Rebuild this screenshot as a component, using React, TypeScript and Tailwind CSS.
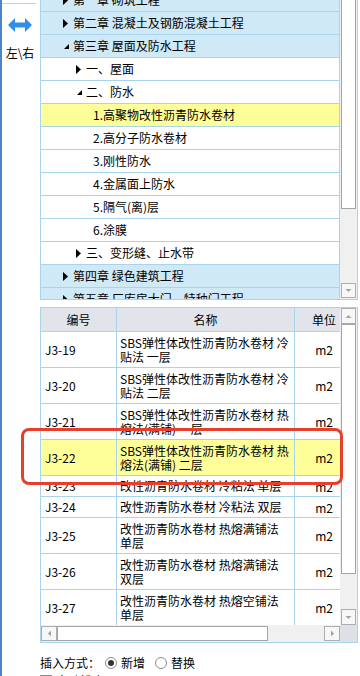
import React from "react";

const LINE = "border-[#a8d4ef]";

type TreeRow = {
  text: string;
  level: 0 | 1 | 2;
  kind: "closed" | "open" | "leaf";
  tone: "blue" | "white" | "yellow";
};

const TREE: TreeRow[] = [
  { text: "第一章 砌筑工程", level: 0, kind: "closed", tone: "blue" },
  { text: "第二章 混凝土及钢筋混凝土工程", level: 0, kind: "closed", tone: "blue" },
  { text: "第三章 屋面及防水工程", level: 0, kind: "open", tone: "blue" },
  { text: "一、屋面", level: 1, kind: "closed", tone: "white" },
  { text: "二、防水", level: 1, kind: "open", tone: "white" },
  { text: "1.高聚物改性沥青防水卷材", level: 2, kind: "leaf", tone: "yellow" },
  { text: "2.高分子防水卷材", level: 2, kind: "leaf", tone: "white" },
  { text: "3.刚性防水", level: 2, kind: "leaf", tone: "white" },
  { text: "4.金属面上防水", level: 2, kind: "leaf", tone: "white" },
  { text: "5.隔气(离)层", level: 2, kind: "leaf", tone: "white" },
  { text: "6.涂膜", level: 2, kind: "leaf", tone: "white" },
  { text: "三、变形缝、止水带", level: 1, kind: "closed", tone: "white" },
  { text: "第四章 绿色建筑工程", level: 0, kind: "closed", tone: "blue" },
  { text: "第五章 厂库房大门、特种门工程", level: 0, kind: "closed", tone: "blue" },
];

type Item = { code: string; name: string[]; unit: string; hl?: boolean };

const ITEMS: Item[] = [
  { code: "J3-19", name: ["SBS弹性体改性沥青防水卷材 冷", "贴法 一层"], unit: "m2" },
  { code: "J3-20", name: ["SBS弹性体改性沥青防水卷材 冷", "贴法 二层"], unit: "m2" },
  { code: "J3-21", name: ["SBS弹性体改性沥青防水卷材 热", "熔法(满铺) 一层"], unit: "m2" },
  { code: "J3-22", name: ["SBS弹性体改性沥青防水卷材 热", "熔法(满铺) 二层"], unit: "m2", hl: true },
  { code: "J3-23", name: ["改性沥青防水卷材 冷粘法 单层"], unit: "m2" },
  { code: "J3-24", name: ["改性沥青防水卷材 冷粘法 双层"], unit: "m2" },
  { code: "J3-25", name: ["改性沥青防水卷材 热熔满铺法", "单层"], unit: "m2" },
  { code: "J3-26", name: ["改性沥青防水卷材 热熔满铺法", "双层"], unit: "m2" },
  { code: "J3-27", name: ["改性沥青防水卷材 热熔空铺法", "单层"], unit: "m2" },
];

function Caret({ open }: { open: boolean }) {
  return (
    <svg width="10" height="9" viewBox="0 0 10 9" className="shrink-0">
      {open ? <polygon points="6,2 6,7 1,7" fill="#000" /> : <polygon points="0,0 5,4.5 0,9" fill="#000" />}
    </svg>
  );
}

// little grey arrow used on scrollbar buttons
function ScrollBtn({ dir, className }: { dir: "up" | "down" | "left" | "right"; className: string }) {
  const pts = {
    up: "1.5,5 7.5,5 4.5,2",
    down: "1.5,2 7.5,2 4.5,5",
    left: "5,1.5 5,7.5 2,4.5",
    right: "2,1.5 2,7.5 5,4.5",
  }[dir];
  const vert = dir === "up" || dir === "down";
  return (
    <div className={`flex shrink-0 items-center justify-center border border-[#adadad] bg-[#f7f7f7] ${className}`}>
      <svg width={vert ? 9 : 7} height={vert ? 7 : 9} viewBox={vert ? "0 0 9 7" : "0 0 7 9"}>
        <polygon points={pts} fill="#a3a3a3" />
      </svg>
    </div>
  );
}

function Tree() {
  return (
    <div className={`flex h-[300px] shrink-0 border-x border-b ${LINE}`}>
      <div className={`w-[299px] overflow-hidden border-r ${LINE}`}>
        <div className="-mt-[11px]">
          {TREE.map((r) => (
            <div
              key={r.text}
              className={`flex h-[23px] items-center border-b ${LINE} ${
                r.tone === "blue" ? "bg-[#cfe9f7]" : r.tone === "yellow" ? "bg-[#ffff99]" : "bg-white"
              } ${r.level === 0 ? "pl-[22px]" : r.level === 1 ? "pl-[35px]" : "pl-[52px]"}`}
            >
              {r.kind !== "leaf" && <Caret open={r.kind === "open"} />}
              <span className="whitespace-nowrap">{r.text}</span>
            </div>
          ))}
        </div>
      </div>
      <div className="flex w-[17px] flex-col bg-[#f0f0f0]">
        <div className="mx-px h-[209px] shrink-0 border-x border-b border-[#a5a5a5] bg-white" />
        <div className="flex-1" />
        <ScrollBtn dir="down" className="mx-px mb-px h-[15px]" />
      </div>
    </div>
  );
}

function Table() {
  return (
    <div className={`flex h-[336px] shrink-0 border ${LINE}`}>
      <div className="flex w-[299px] flex-col">
        <div className={`flex h-[24px] shrink-0 border-b ${LINE} bg-[#e1e5eb]`}>
          <div className={`flex w-[76px] items-center justify-center border-r ${LINE}`}>编号</div>
          <div className={`flex w-[178px] items-center justify-center border-r ${LINE}`}>名称</div>
          <div className="flex flex-1 items-center justify-end pr-[4px]">单位</div>
        </div>
        <div className="h-[293px] shrink-0 overflow-hidden">
          {ITEMS.map((it) => (
            <div
              key={it.code}
              className={`flex border-b ${LINE} ${it.name.length > 1 ? "h-[36px]" : "h-[21px]"} ${
                it.hl ? "bg-[#ffff99]" : "bg-white"
              }`}
            >
              <div className={`flex w-[76px] items-center border-r ${LINE} pl-[4px]`}>{it.code}</div>
              <div className={`flex w-[178px] flex-col justify-center border-r ${LINE} pl-[3px]`}>
                {it.name.map((l) => (
                  <span key={l} className="whitespace-nowrap">
                    {l}
                  </span>
                ))}
              </div>
              <div className="flex flex-1 items-center justify-end pr-[7px] pt-px">{it.unit}</div>
            </div>
          ))}
        </div>
        <div className="flex h-[17px] shrink-0 bg-[#f0f0f0]">
          <ScrollBtn dir="left" className="my-px w-[16px]" />
          <div className="my-px w-[211px] border border-[#a5a5a5] bg-white" />
          <div className="flex-1" />
          <ScrollBtn dir="right" className="my-px w-[16px]" />
        </div>
      </div>
      <div className="flex w-[17px] flex-col bg-[#f0f0f0]">
        <ScrollBtn dir="up" className="mx-px h-[16px]" />
        <div className="mx-px h-[250px] shrink-0 border border-[#a5a5a5] bg-white" />
        <div className="flex-1" />
        <ScrollBtn dir="down" className="mx-px h-[16px]" />
        <div className="h-[17px] shrink-0 bg-[#dde1e7]" />
      </div>
    </div>
  );
}

function Radio({ on, label }: { on?: boolean; label: string }) {
  return (
    <span className="flex items-center gap-[4px]">
      <span className="flex h-[12px] w-[12px] items-center justify-center rounded-full border border-[#8c8c8c] bg-white">
        {on && <span className="h-[6px] w-[6px] rounded-full bg-[#333]" />}
      </span>
      {label}
    </span>
  );
}

export default function App() {
  return (
    <div className="relative flex h-[676px] w-[360px] overflow-hidden bg-white font-['Noto_Sans_CJK_SC',sans-serif] text-[12px] leading-[14px] text-black">
      <div className="w-[2px] shrink-0 bg-[#4a86c5]" />

      {/* left/right toggle */}
      <div className="flex w-[38px] shrink-0 flex-col items-center">
        <div className="mt-[3px] h-px w-[34px] self-start bg-[#cfcfcf]" />
        <svg width="24" height="14" viewBox="0 0 24 14" className="mt-[14px] ml-[-2px]">
          <polygon points="0,7 7,0 7,4.5 17,4.5 17,0 24,7 17,14 17,9.5 7,9.5 7,14" fill="#2f8fe8" />
        </svg>
        <div className="mt-[14px] ml-[-2px]">左\右</div>
      </div>

      <div className="flex w-[318px] shrink-0 flex-col">
        <Tree />
        <div className="h-[7px] shrink-0" />
        <Table />
        <div className="mt-[12px] flex h-[16px] shrink-0 items-center">
          <span className="w-[65px]">插入方式：</span>
          <Radio on label="新增" />
          <span className="w-[10px]" />
          <Radio label="替换" />
        </div>
        <div className="mt-[3px] flex shrink-0 items-center gap-[4px]">
          <span className="h-[12px] w-[12px] border border-[#8c8c8c] bg-white" />
          自动排序
        </div>
      </div>

      {/* annotation */}
      <div className="pointer-events-none absolute left-[21px] top-[428px] h-[57px] w-[322px] rounded-[8px] border-[3px] border-[#e6402d]" />
    </div>
  );
}
